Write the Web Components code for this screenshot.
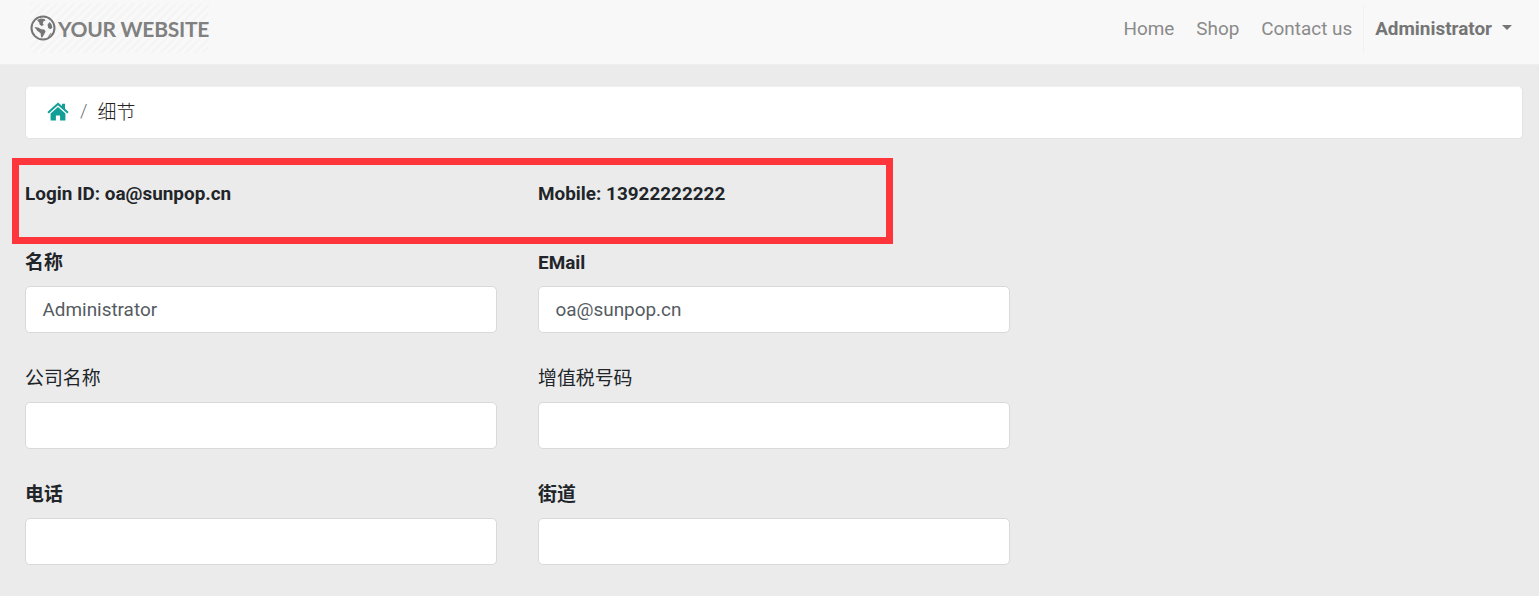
<!DOCTYPE html>
<html><head><meta charset="utf-8">
<style>
html,body{margin:0;padding:0;height:596px;overflow:hidden;background:#ebebeb;font-family:Roboto,"Noto Sans CJK SC",sans-serif;}
body{position:relative;}
</style></head>
<body>
<site-nav></site-nav>
<main-area>
  <bread-crumb>细节</bread-crumb>
  <form-grid>
    <info-text>Login ID: oa@sunpop.cn</info-text>
    <info-text>Mobile: 13922222222</info-text>
    <form-field label="名称" bold value="Administrator"></form-field>
    <form-field label="EMail" bold value="oa@sunpop.cn"></form-field>
    <form-field label="公司名称"></form-field>
    <form-field label="增值税号码"></form-field>
    <form-field label="电话" bold></form-field>
    <form-field label="街道" bold></form-field>
  </form-grid>
</main-area>
<red-mark></red-mark>
<script>
const def=(name,html,init)=>customElements.define(name,class extends HTMLElement{
  constructor(){super();this.attachShadow({mode:'open'}).innerHTML=html;}
  connectedCallback(){if(init)init.call(this,this.shadowRoot);}
});
def('site-nav',`<style>
:host{display:flex;box-sizing:border-box;height:65px;align-items:center;justify-content:space-between;background:#f8f8f8;padding:0 27px 7px 30px;border-bottom:1px solid #efefef;}
.logo{display:flex;align-items:center;gap:2px;color:#808080;font:700 21px/1 Lato,sans-serif;letter-spacing:-.25px;background:repeating-linear-gradient(135deg,#f5f5f5 0 3px,#f9f9f9 3px 6px);padding:12px 0;margin-top:-1px;}
svg{display:block}
nav{display:flex;align-items:center;font-size:18.9px;color:#8a8a8a;}
a{display:block;margin-right:22px;white-space:nowrap;}
a:nth-child(3){margin-right:11px;}
.user{border-left:1px solid #f1f1f1;height:48px;display:flex;align-items:center;padding-left:11px;font-weight:700;color:#757575;gap:10px;}
.caret{width:0;height:0;border:5.5px solid transparent;border-top-color:#757575;border-bottom:0;margin-top:-3px;}
</style>
<div class="logo"><svg width="26" height="26" viewBox="0 0 26 26"><circle cx="13" cy="13" r="11.500" fill="none" stroke="#757575" stroke-width="2"/><path fill="#757575" d="M7 5 11 3.500l3.500.5 1.100 1.600-2.300.9-.5 2 1 1.400-2.200 1-2-1.500-.4-2zM4.500 12l3.500.4 3.300 1.800 3 .4 1.300 1.800-1.600 3.200-1.700 3-1.200-.4-.5-4-3-2.200-2.300-2.700zM19.500 7l2 2.200.9 3.600-1.900 1.400-2.300-1.300-.7-3.200zM20.500 18l.8.400-2.200 3-1.300.5z"/></svg><span>YOUR WEBSITE</span></div>
<nav><a>Home</a><a>Shop</a><a>Contact us</a><div class="user"><span>Administrator</span><span class="caret"></span></div></nav>`);
def('main-area',`<style>:host{display:block;padding:21px 16px 0 25px;}</style><slot></slot>`);
def('bread-crumb',`<style>
:host{display:flex;box-sizing:border-box;height:53px;align-items:center;background:#fff;border:1px solid #e3e3e3;border-top-color:#f0f0f0;border-radius:5px;padding:0 0 4px 21px;font-size:18.9px;color:#222;font-weight:300;}
svg{display:block;margin-top:2px}
.sep{margin:0 10px 0 11px;color:#6c757d;}
</style>
<svg width="22" height="19" viewBox="0 0 22 19"><path fill="#119e96" d="M11 .5 15 4V1.800h3V6.800L21.600 10l-1.300 1.500L11 3.300 1.700 11.500.4 10z"/><path fill="#119e96" d="M3.600 11.400 11 5l7.400 6.400V18.500h-5.300V13.500H8.900V18.500H3.600z"/></svg>
<span class="sep">/</span><slot></slot>`);
def('form-grid',`<style>:host{display:grid;grid-template-columns:472px 472px;column-gap:41px;padding-top:41px;}</style><slot></slot>`);
def('info-text',`<style>:host{display:block;height:69px;font-size:18.9px;line-height:27px;font-weight:700;color:#212529;}</style><slot></slot>`);
def('form-field',`<style>
:host{display:block;height:116px;}
label{display:block;font-size:18.9px;line-height:27px;height:27px;color:#212529;margin-bottom:10px;}
.b{font-weight:700}
.in{box-sizing:border-box;height:47px;background:#fff;border:1px solid #d9d9d9;border-radius:5px;padding:0 16.500px;font-size:18.9px;line-height:45px;color:#555b62;}
</style><label></label><div class="in"></div>`,function(r){
  const l=r.querySelector('label');l.textContent=this.getAttribute('label');if(this.hasAttribute('bold'))l.className='b';
  r.querySelector('.in').textContent=this.getAttribute('value')||'';
});
def('red-mark',`<style>:host{position:absolute;left:12px;top:158px;width:881px;height:86px;box-sizing:border-box;border:7px solid #fe363b;pointer-events:none;}</style>`);
</script>
</body></html>
